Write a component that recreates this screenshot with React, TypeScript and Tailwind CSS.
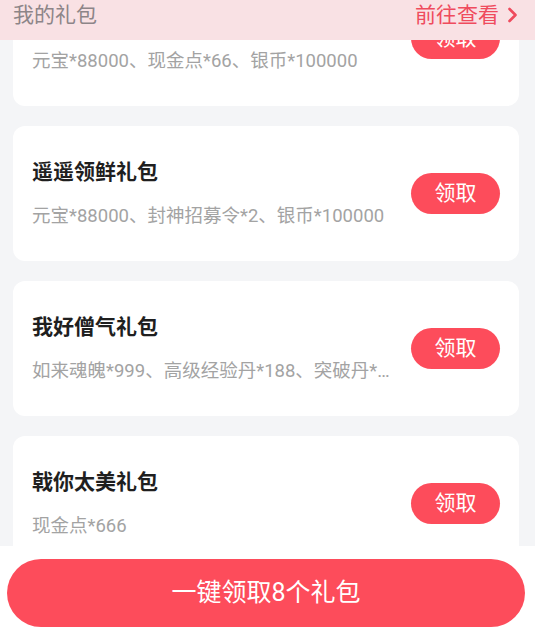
import React from "react";

type Gift = { name: string; items: string };

const gifts: Gift[] = [
  { name: "新人专属礼包", items: "元宝*88000、现金点*66、银币*100000" },
  { name: "遥遥领鲜礼包", items: "元宝*88000、封神招募令*2、银币*100000" },
  { name: "我好僧气礼包", items: "如来魂魄*999、高级经验丹*188、突破丹*10、银币*100000" },
  { name: "戟你太美礼包", items: "现金点*666" },
];

const font = { fontFamily: 'Roboto, "Noto Sans CJK SC", "Noto Sans", sans-serif' };

export default function App() {
  return (
    <div className="relative h-[630px] w-[535px] overflow-hidden bg-[#f4f5f7]" style={font}>
      <div className="mt-[-29px] flex flex-col gap-5 pl-[13px] pr-4">
        {gifts.map((g) => (
          <GiftCard key={g.name} gift={g} />
        ))}
      </div>

      <div className="absolute left-0 right-0 top-0 flex h-10 items-start justify-between bg-[#f9e1e4] pl-[13px] pr-[17px]">
        <span className="text-[21px] leading-[30px] text-[#8d8588]">我的礼包</span>
        <span className="flex items-center gap-[8px] text-[21px] leading-[30px] text-[#ef4b5d]">
          前往查看
          <svg width="11" height="16" viewBox="0 0 11 16" fill="none">
            <path d="M2.5 2 L8.5 8 L2.5 14" stroke="#ef4b5d" strokeWidth="2.6" strokeLinecap="round" strokeLinejoin="round" />
          </svg>
        </span>
      </div>

      <div className="absolute bottom-0 left-0 right-0 flex h-[84px] items-end bg-white pb-[3px] pl-[7px] pr-[10px]">
        <button className="h-[68px] w-full rounded-full bg-[#fd4c5b] text-[25px] text-white">
          一键领取8个礼包
        </button>
      </div>
    </div>
  );
}

function GiftCard({ gift }: { gift: Gift }) {
  return (
    <div className="flex h-[135px] items-center justify-between rounded-xl bg-white px-[19px]">
      <div className="flex w-[358px] flex-col">
        <span className="text-[21px] font-bold leading-[28px] text-[#1f1f1f]">{gift.name}</span>
        <span className="mt-[17px] truncate text-[18.5px] leading-[26px] text-[#a3a3a3]">{gift.items}</span>
      </div>
      <button className="h-[41px] w-[89px] rounded-full bg-[#fd4c5b] text-[21px] text-white">领取</button>
    </div>
  );
}
